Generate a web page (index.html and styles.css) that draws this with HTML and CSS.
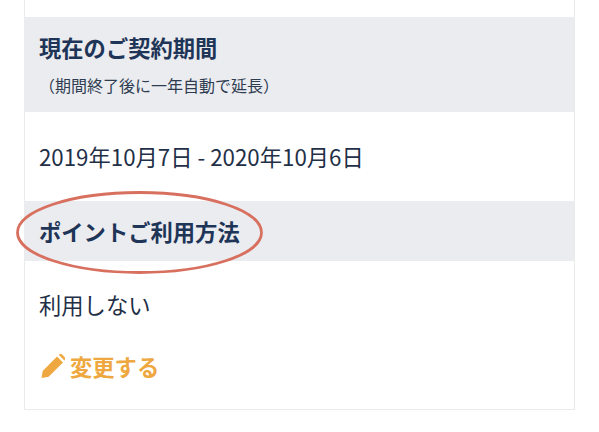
FILE: index.html
```html
<!DOCTYPE html>
<html lang="ja">
<head>
<meta charset="utf-8">
<title>ご契約内容</title>
<link rel="stylesheet" href="styles.css">
</head>
<body>
<main class="card">
  <section class="head head-tall">
    <h2 class="title">現在のご契約期間</h2>
    <p class="note">（期間終了後に一年自動で延長）</p>
  </section>
  <p class="value value-date">2019年10月7日 - 2020年10月6日</p>
  <section class="head head-short">
    <h2 class="title">ポイントご利用方法</h2>
    <svg class="ring" width="249" height="85" viewBox="0 0 249 85" aria-hidden="true">
      <ellipse cx="123.5" cy="42.5" rx="122" ry="40" fill="none" stroke="#d8705f" stroke-width="2.8"/>
    </svg>
  </section>
  <p class="value value-use">利用しない</p>
  <a class="edit" href="#">
    <svg class="pencil" width="26" height="26" viewBox="0 0 25 25" aria-hidden="true">
      <path d="M1.5 24 L2.6 17.2 L16.4 3.4 L22.1 9.1 L8.3 22.9 Z M18 1.8 L19.4 1 Q20.4 .6 21.2 1.4 L23.6 3.8 Q24.4 4.6 24 5.6 L23.7 7.5 Z" fill="#eea83f"/>
    </svg>
    <span>変更する</span>
  </a>
</main>
</body>
</html>
```
FILE: styles.css
```css
html, body {
  margin: 0;
  padding: 0;
  background: #ffffff;
}
body {
  width: 599px;
  height: 432px;
  overflow: hidden;
  font-family: "Noto Sans CJK JP", "Noto Sans", sans-serif;
  color: #1f3047;
}
.card {
  box-sizing: border-box;
  width: 551px;
  height: 410px;
  margin-left: 24px;
  padding-top: 17px;
  border: 1px solid #ebebeb;
  border-top: 0;
}
.head {
  position: relative;
  background: #ebecf0;
  padding-left: 14px;
}
.head-tall {
  height: 95px;
  padding-top: 15px;
  box-sizing: border-box;
}
.head-short {
  height: 60px;
  display: flex;
  align-items: center;
}
.title {
  margin: 0;
  font-size: 22.3px;
  line-height: 30px;
  font-weight: 700;
  color: #1e3557;
}
.note {
  margin: 11px 0 0;
  font-size: 16px;
  line-height: 24px;
  color: #2f3c50;
}
.value {
  margin: 0;
  font-size: 22.3px;
  line-height: 30px;
}
.value-date {
  padding: 29px 0 30px 14px;
}
.value-use {
  padding: 28px 0 0 14px;
}
.ring {
  position: absolute;
  left: -9px;
  top: -11px;
}
.edit {
  display: flex;
  align-items: center;
  gap: 4px;
  margin: 32px 0 0 15px;
  font-size: 22.3px;
  line-height: 30px;
  font-weight: 700;
  color: #eea83f;
  text-decoration: none;
}
.pencil {
  flex: none;
}
```
